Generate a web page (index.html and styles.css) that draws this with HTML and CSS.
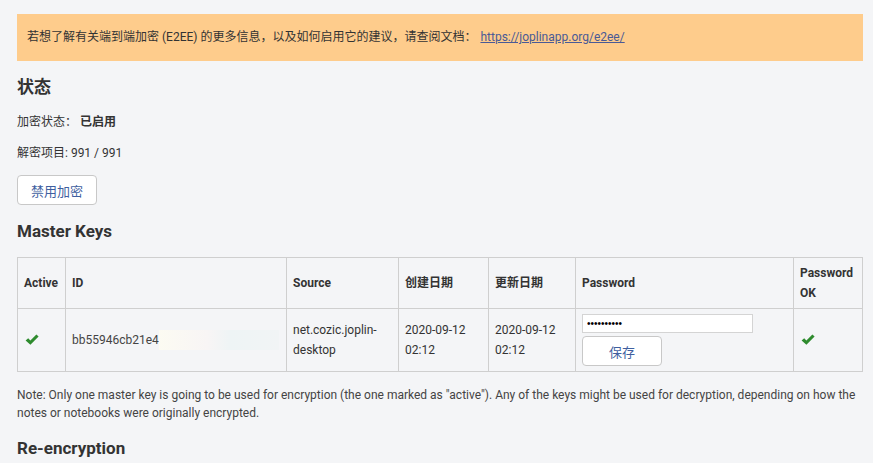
FILE: index.html
```html
<!DOCTYPE html>
<html lang="zh-CN">
<head>
  <meta charset="UTF-8">
  <title>加密</title>
  <link rel="stylesheet" href="styles.css">
</head>
<body>
  <div class="page">
    <div class="notice">
      若想了解有关端到端加密 (E2EE) 的更多信息，以及如何启用它的建议，请查阅文档：
      <a href="#">https://joplinapp.org/e2ee/</a>
    </div>

    <h2>状态</h2>
    <p class="line">加密状态： <b>已启用</b></p>
    <p class="line last">解密项目: 991 / 991</p>
    <button class="btn">禁用加密</button>

    <h2>Master Keys</h2>
    <table class="keys">
      <thead>
        <tr>
          <th class="c-active">Active</th>
          <th class="c-id">ID</th>
          <th class="c-src">Source</th>
          <th class="c-date">创建日期</th>
          <th class="c-date2">更新日期</th>
          <th class="c-pw">Password</th>
          <th class="c-ok">Password OK</th>
        </tr>
      </thead>
      <tbody>
        <tr>
          <td>
            <svg class="check" viewBox="0 0 14 12" width="14" height="12"><path d="M0.6 6.4 L3.2 4.2 L5.4 6.6 L11.4 0.6 L13.6 2.6 L5.4 10.8 Z" fill="#2e8b2e"/></svg>
          </td>
          <td class="id-cell"><span class="id-text">bb55946cb21e4</span><span class="id-blur"></span></td>
          <td>net.cozic.joplin-<br>desktop</td>
          <td>2020-09-12<br>02:12</td>
          <td>2020-09-12<br>02:12</td>
          <td>
            <input class="pw" type="password" value="aaaaaaaaaa">
            <button class="btn save">保存</button>
          </td>
          <td>
            <svg class="check" viewBox="0 0 14 12" width="14" height="12"><path d="M0.6 6.4 L3.2 4.2 L5.4 6.6 L11.4 0.6 L13.6 2.6 L5.4 10.8 Z" fill="#2e8b2e"/></svg>
          </td>
        </tr>
      </tbody>
    </table>

    <p class="note">Note: Only one master key is going to be used for encryption (the one marked as "active"). Any of the keys might be used for decryption, depending on how the notes or notebooks were originally encrypted.</p>

    <h2>Re-encryption</h2>
  </div>
</body>
</html>
```

FILE: styles.css
```css
body {
  margin: 0;
  background: #f4f5f7;
  color: #333;
  font-family: Roboto, "Noto Sans CJK SC", sans-serif;
  font-size: 12px;
}
.page { padding: 14px 10px 0 17px; }

.notice {
  background: #fecc8c;
  padding: 14px 10px 14px 10px;
  line-height: 19px;
  color: #333;
}
.notice a { color: #4a5a96; margin-left: 1px; }

h2 {
  font-size: 17px;
  font-weight: bold;
  margin: 15px 0 15px 0;
  line-height: 22px;
}
.line { margin: 0 0 13px 0; line-height: 18px; }
.line.last { margin-bottom: 13px; }
.line b { font-weight: bold; }

.btn {
  font-family: Roboto, "Noto Sans CJK SC", sans-serif;
  font-size: 13px;
  color: #3f5f9f;
  background: #fff;
  border: 1px solid #c8c8c8;
  border-radius: 4px;
  width: 80px;
  height: 30px;
  padding: 0;
  display: block;
}

.keys {
  width: 100%;
  border-collapse: collapse;
  margin-top: 0;
}
.keys th, .keys td {
  border: 1px solid #cfcfcf;
  text-align: left;
  padding: 0 6px;
  line-height: 20px;
  vertical-align: middle;
}
.keys th { height: 50px; font-weight: bold; }
.keys td { height: 62px; }
.c-active { width: 35px; }
.c-id { width: 208px; }
.c-src { width: 99px; }
.c-date { width: 77px; }
.c-date2 { width: 74px; }
.c-pw { width: 205px; }

.check { display: block; margin-left: 1px; }

.id-cell { white-space: nowrap; overflow: hidden; }
.id-text { color: #444; }
.id-blur {
  display: inline-block;
  vertical-align: middle;
  width: 120px;
  height: 20px;
  background: linear-gradient(90deg, #fcfbf2, #f8f5f5 40%, #eef4f5 60%, #f1f4f5);
}

.pw {
  display: block;
  box-sizing: border-box;
  width: 171px;
  height: 19px;
  border: 1px solid #d4d4d4;
  background: #fff;
  padding: 0 4px;
  font-size: 10px;
  margin: 0 0 3px 0;
}
.save { height: 30px; }

.note {
  color: #444;
  line-height: 18px;
  margin: 14px 0 6px 0;
  font-size: 12px;
}
```
